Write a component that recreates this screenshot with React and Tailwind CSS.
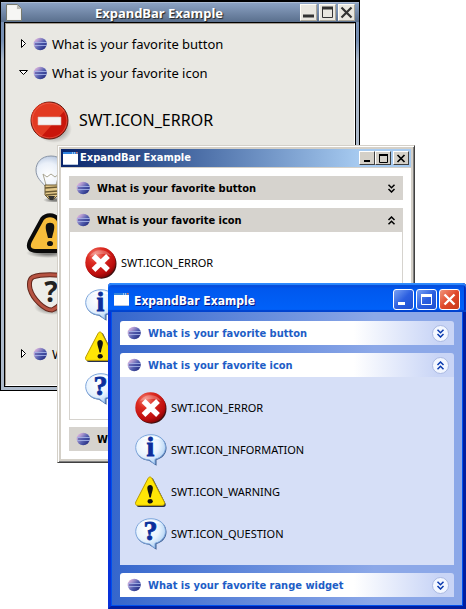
import React from "react";

const tahoma = "font-['DejaVu_Sans_Condensed','DejaVu_Sans',sans-serif]";

/* ---------- shared drawings ---------- */

function Defs() {
  return (
    <svg width="0" height="0" className="absolute" aria-hidden="true">
      <defs>
        <linearGradient id="sphere" x1="0" y1="0" x2="1" y2="0.8">
          <stop offset="0" stopColor="#f6c0e6" />
          <stop offset="0.3" stopColor="#b09ad0" />
          <stop offset="0.6" stopColor="#5560b0" />
          <stop offset="1" stopColor="#20287c" />
        </linearGradient>
        <radialGradient id="red" cx="0.35" cy="0.25" r="0.8">
          <stop offset="0" stopColor="#f58a7c" />
          <stop offset="0.35" stopColor="#dd2c22" />
          <stop offset="0.8" stopColor="#bd0d0d" />
          <stop offset="1" stopColor="#7d0505" />
        </radialGradient>
        <radialGradient id="bubble" cx="0.4" cy="0.35" r="0.7">
          <stop offset="0" stopColor="#ffffff" />
          <stop offset="0.55" stopColor="#e8f3fe" />
          <stop offset="1" stopColor="#a5cbf2" />
        </radialGradient>
        <radialGradient id="bulb" cx="0.4" cy="0.65" r="0.7">
          <stop offset="0" stopColor="#ffffff" />
          <stop offset="0.6" stopColor="#eaf0f9" />
          <stop offset="1" stopColor="#b6c6de" />
        </radialGradient>
        <radialGradient id="shade">
          <stop offset="0.3" stopColor="#000" stopOpacity="0.45" />
          <stop offset="1" stopColor="#000" stopOpacity="0" />
        </radialGradient>
      </defs>
    </svg>
  );
}

function Sphere() {
  return (
    <svg width="15" height="14" viewBox="0 0 15 14" className="shrink-0" aria-hidden="true">
      <ellipse cx="7.2" cy="7" rx="6.600" ry="6.200" fill="url(#sphere)" />
      <path d="M2 7h11" stroke="#39459a" strokeWidth="1" />
      <path d="M1 5.500h13M1 8.500h13" stroke="#a3b0e4" strokeWidth="0.900" />
    </svg>
  );
}

function ErrorIcon() {
  return (
    <svg width="32" height="32" viewBox="0 0 32 32" className="shrink-0" aria-hidden="true">
      <circle cx="16.500" cy="16.700" r="15" fill="#3b1010" />
      <circle cx="15.500" cy="15.500" r="15.200" fill="url(#red)" />
      <path d="M5 9C9 2 21 1 26 9 19 6 12 7 5 9Z" fill="#fff" opacity="0.25" />
      <path d="M8.500 9l14.500 14M23 9L8.500 23" stroke="#fff" strokeWidth="5.400" />
    </svg>
  );
}

function BubbleIcon({ glyph }) {
  return (
    <svg width="32" height="32" viewBox="0 0 32 32" className="shrink-0" aria-hidden="true">
      <path
        d="M17 1.500C26 1.500 31.500 7 31.500 14c0 6-4.500 10.500-10 12v5.800L14 26.800C6 26 1.200 21 1.200 14.500 1.200 7 8 1.500 17 1.500Z"
        fill="#35588e"
      />
      <path
        d="M16 .7C25 .7 30.500 6.500 30.500 13.300c0 6.200-4.500 10.700-10.500 12v5L14.500 26C6 25.500.700 20.300.700 13.500.700 6.500 7 .7 16 .7Z"
        fill="url(#bubble)"
        stroke="#7fa7dc"
        strokeWidth="1"
      />
      <path d="M6 6C11 1 21 1 26 6 20 4 12 4 6 6Z" fill="#fff" />
      <text
        x="15.500"
        y="22"
        textAnchor="middle"
        fontSize="28"
        fontWeight="700"
        fill="#0b2f9c"
        stroke="#0b2f9c"
        strokeWidth="0.800"
        className="font-['Liberation_Serif',serif]"
      >
        {glyph}
      </text>
    </svg>
  );
}

function WarningIcon() {
  return (
    <svg width="32" height="32" viewBox="0 0 32 32" className="shrink-0" aria-hidden="true">
      <path d="M14.500 3.500c1-2 3-2 4 0l12 24c.7 2-.2 3.500-2 3.500H4c-2 0-2.500-1-2-3Z" fill="#26304e" />
      <path
        d="M13 2.500c1-2 3-2 4 0l12.300 23.500c.8 2-.2 3.400-2 3.400H2.700c-2 0-2.700-1.400-1.900-3.400Z"
        fill="#ffe606"
        stroke="#b99a00"
        strokeWidth="1"
      />
      <path d="M12.300 12c0-4 5.600-4 5.600 0 0 3-1.500 5-2 9.500h-1.500c-.5-4.500-2.100-6.500-2.100-9.500Z" fill="#111" />
      <ellipse cx="15.200" cy="25.300" rx="2.600" ry="2.300" fill="#111" />
    </svg>
  );
}

function Chevrons({ open, color }) {
  return (
    <svg width="9" height="9" viewBox="0 0 9 9" className="shrink-0" fill="none" stroke={color} strokeWidth="1.500" aria-hidden="true">
      {open ? (
        <path d="M1.500 4l3-3 3 3M1.500 8.200l3-3 3 3" />
      ) : (
        <path d="M1.500 .8l3 3 3-3M1.500 5l3 3 3-3" />
      )}
    </svg>
  );
}

function AppIcon() {
  return (
    <svg width="15" height="13" viewBox="0 0 15 13" className="shrink-0" aria-hidden="true">
      <path d="M0 0h15v13H0z" fill="#fff" />
      <path d="M0 0h15v2H0z" fill="#2f83df" />
      <path d="M9 .5h1v1H9zM11 .5h1v1h-1z" fill="#fff" />
      <path d="M13 0h1.500v1.500H13z" fill="#e4674d" />
      <path d="M0 12.500h15" stroke="#b8c8e0" />
    </svg>
  );
}

const items = [
  { label: "SWT.ICON_ERROR", icon: <ErrorIcon /> },
  { label: "SWT.ICON_INFORMATION", icon: <BubbleIcon glyph="i" /> },
  { label: "SWT.ICON_WARNING", icon: <WarningIcon /> },
  { label: "SWT.ICON_QUESTION", icon: <BubbleIcon glyph="?" /> },
];

function IconList() {
  return (
    <ul className="flex flex-col gap-[10px] font-['Noto_Sans',sans-serif]">
      {items.map((item) => (
        <li key={item.label} className="flex items-center gap-1 text-[11px] leading-4 text-black">
          {item.icon}
          <span>{item.label}</span>
        </li>
      ))}
    </ul>
  );
}

/* ---------- GTK window ---------- */

function GtkButton({ label, children }) {
  return (
    <button
      aria-label={label}
      className="flex size-[17px] items-center justify-center border border-t-[#fffdf6] border-r-[#aaa597] border-b-[#aaa597] border-l-[#fffdf6] bg-[#e9e7e0]"
    >
      <svg width="13" height="13" viewBox="0 0 13 13" fill="none" stroke="#333" aria-hidden="true">
        {children}
      </svg>
    </button>
  );
}

function GtkHeader({ open, children }) {
  return (
    <button className="flex h-[29px] items-center text-left text-[13px] leading-5 text-black">
      <svg width="11" height="11" viewBox="0 0 11 11" className="mr-1 shrink-0" fill="#fff" stroke="#000" aria-hidden="true">
        {open ? <path d="M1.500 3.500h8l-4 4Z" /> : <path d="M3.500 1.500v8l4-4Z" />}
      </svg>
      <Sphere />
      <span className="ml-1 whitespace-nowrap">{children}</span>
    </button>
  );
}

function GtkWindow() {
  return (
    <section className="absolute top-0 left-0 flex h-[391px] w-[360px] flex-col border border-t-2 border-black bg-linear-to-b from-[#7890b4] from-10% to-[#aebbcc] to-15% px-[3px] pb-[3px] font-['Noto_Sans','Open_Sans',sans-serif]">
      <header className="-mx-[3px] flex h-5 shrink-0 items-center border-t border-[#a9b9d2] bg-linear-to-b from-[#8ba2c3] to-[#5a6f8d] pr-1 pl-[5px]">
        <svg width="16" height="17" viewBox="0 0 16 17" aria-hidden="true">
          <path d="M.5.5h11l4 4v12H.5Z" fill="#eeeeec" stroke="#777a70" />
          <path d="M1.500 1.500h9v4h4v10h-13Z" fill="#fafaf8" opacity=".7" />
          <path d="M11 .5v4.500h4.500Z" fill="#bbbbb5" />
        </svg>
        <h1 className="flex-1 pr-1 text-center text-[13px] leading-4 font-bold text-white [text-shadow:1px_1px_1px_#222]">
          ExpandBar Example
        </h1>
        <div className="flex gap-[2px]">
          <GtkButton label="Minimize">
            <path d="M1 10h11" strokeWidth="3" />
          </GtkButton>
          <GtkButton label="Maximize">
            <path d="M1.500 1v10.500h10V1" />
            <path d="M1 2h11" strokeWidth="3" />
          </GtkButton>
          <GtkButton label="Close">
            <path d="M1.500 1.500l10 10M11.500 1.500l-10 10" strokeWidth="2.200" />
          </GtkButton>
        </div>
      </header>
      <div className="flex-1 border border-black bg-[#e9e8e3]">
        <div className="h-full border border-t-[#a49a8e] border-r-white border-b-white border-l-[#a49a8e] px-3 pt-[5px]">
          <div className="flex flex-col items-start">
            <GtkHeader>What is your favorite button</GtkHeader>
            <GtkHeader open>What is your favorite icon</GtkHeader>
          </div>
          <ul className="mt-[2px] ml-2">
            <li className="flex h-[65px] items-start gap-[7px] pt-2 text-[16px] text-black">
              <svg width="48" height="48" viewBox="0 0 48 48" className="shrink-0" aria-hidden="true">
                <ellipse cx="28" cy="32" rx="18" ry="14" fill="url(#shade)" />
                <circle cx="23.500" cy="23.500" r="18.500" fill="#c9160b" stroke="#5e1a10" />
                <path d="M5.800 26C3 13 14 4 25 5.800c7 1 11 4 13.500 8L15 40C10 37 7 32 5.800 26Z" fill="#e23a22" />
                <circle cx="23.500" cy="23.500" r="17.300" fill="none" stroke="#ef7562" opacity=".5" />
                <path d="M12 20h23v8H12z" fill="#f4f4f4" stroke="#ddb9b4" strokeWidth=".6" />
              </svg>
              <span className="-ml-[2px] leading-[46px]">SWT.ICON_ERROR</span>
            </li>
            <li className="h-[57px]">
              <svg width="48" height="48" viewBox="0 0 48 48" aria-hidden="true">
                <ellipse cx="29" cy="46" rx="12" ry="3" fill="url(#shade)" />
                <path d="M25 2C15 2 10 9 10 16c0 8 6 12 9 16h13c3-5 8-8 8-16C40 8 34 2 25 2Z" fill="url(#bulb)" stroke="#8994a5" />
                <path d="M20 31l-3-11 4 3 4-3 4 3 4-3-3 11" fill="none" stroke="#a9a592" />
                <path d="M19 31h13v10l-4 4h-5l-4-4Z" fill="#e4c98a" stroke="#6b5b34" />
                <path d="M19 34l13-1M19 38l13-1M20 41l11-1" stroke="#6b5b34" strokeWidth="1.300" />
                <path d="M22 42h7l-2 4h-3Z" fill="#333" />
              </svg>
            </li>
            <li className="h-[58px]">
              <svg width="48" height="48" viewBox="0 0 48 48" aria-hidden="true">
                <ellipse cx="22" cy="42" rx="22" ry="5" fill="url(#shade)" />
                <path d="M16 8c4-5 12-5 16 0l12 23c2 6 0 9-7 9H11c-7 0-10-3-7-10Z" fill="#f7bd3b" stroke="#0a0a0a" strokeWidth="4" />
                <path d="M20 14c1-3 7-3 8 0 1 4-1 8-2 13h-4c-1-5-3-9-2-13Z" fill="#111" />
                <ellipse cx="24" cy="32.500" rx="3" ry="2.600" fill="#111" />
              </svg>
            </li>
            <li className="h-[70px]">
              <svg width="48" height="48" viewBox="0 0 48 48" aria-hidden="true">
                <ellipse cx="26" cy="38" rx="18" ry="8" fill="url(#shade)" />
                <path d="M7 8c8-3 26-3 34 0 4 2 3 8 1 13-4 10-10 18-16 20-8 0-19-11-22-21-1-5-1-10 3-12Z" fill="#edede9" stroke="#63271c" strokeWidth="5" />
                <path d="M7 8c8-3 26-3 34 0 4 2 3 8 1 13-4 10-10 18-16 20-8 0-19-11-22-21-1-5-1-10 3-12Z" fill="none" stroke="#b65342" strokeWidth="3" />
                <text x="25" y="33" textAnchor="middle" fontSize="28" fontWeight="700" fill="#222">
                  ?
                </text>
              </svg>
            </li>
          </ul>
          <GtkHeader>What is your favorite range widget</GtkHeader>
        </div>
      </div>
    </section>
  );
}

/* ---------- Windows classic ---------- */

function ClassicButton({ label, children }) {
  return (
    <button
      aria-label={label}
      className="flex h-[14px] w-4 items-center justify-center border border-t-white border-r-[#404040] border-b-[#404040] border-l-white bg-[#d4d0c8]"
    >
      <svg width="12" height="11" viewBox="0 0 12 11" fill="none" stroke="#000" aria-hidden="true">
        {children}
      </svg>
    </button>
  );
}

function ClassicHeader({ open, children }) {
  return (
    <button className="flex h-6 w-full items-center bg-[#d6d3ce] px-[7px] text-left text-[11px] leading-4 font-bold text-black">
      <Sphere />
      <span className="ml-1.5 flex-1 pt-0.5 whitespace-nowrap">{children}</span>
      <Chevrons open={open} color="#000" />
    </button>
  );
}

function ClassicWindow() {
  return (
    <section
      className={`absolute top-[145px] left-[57px] flex h-[318px] w-[358px] flex-col border border-t-[#d4d0c8] border-r-[#404040] border-b-[#404040] border-l-[#d4d0c8] bg-[#d4d0c8] shadow-[inset_1px_1px_#fff,inset_-1px_-1px_#808080] ${tahoma}`}
    >
      <div className="flex flex-1 flex-col p-[3px]">
        <header className="mb-px flex h-[18px] shrink-0 items-center bg-linear-to-r from-[#0a246a] to-[#a6caf0] to-85% px-[2px]">
          <AppIcon />
          <h2 className="ml-[2px] flex-1 text-[11px] leading-4 font-bold text-white">ExpandBar Example</h2>
          <ClassicButton label="Minimize">
            <path d="M3 8h6" strokeWidth="2" />
          </ClassicButton>
          <ClassicButton label="Maximize">
            <path d="M2.500 1v8.500h8V1" />
            <path d="M2 2h9" strokeWidth="2" />
          </ClassicButton>
          <span className="w-[2px]" />
          <ClassicButton label="Close">
            <path d="M2.500 2l7 7M9.500 2l-7 7" strokeWidth="1.700" />
          </ClassicButton>
        </header>
        <div className="flex-1 bg-white p-2">
          <div className="flex flex-col">
            <ClassicHeader>What is your favorite button</ClassicHeader>
            <div className="mt-2 mb-[7px]">
              <ClassicHeader open>What is your favorite icon</ClassicHeader>
              <div className="border border-t-0 border-[#d6d3ce] px-[15px] pt-[15px] pb-[14px]">
                <IconList />
              </div>
            </div>
            <ClassicHeader>What is your favorite range widget</ClassicHeader>
          </div>
        </div>
      </div>
    </section>
  );
}

/* ---------- Windows XP ---------- */

function LunaButton({ label, close, children }) {
  return (
    <button
      aria-label={label}
      className={`flex size-[21px] items-center justify-center rounded-[3px] border border-white ${
        close
          ? "bg-linear-to-br from-[#f0937a] via-[#e0482a] to-[#c83a1c]"
          : "bg-linear-to-br from-[#7aa0f2] via-[#2c5fe0] to-[#1d4fd0]"
      }`}
    >
      <svg width="19" height="19" viewBox="0 0 19 19" fill="none" stroke="#fff" aria-hidden="true">
        {children}
      </svg>
    </button>
  );
}

function LunaHeader({ open, children }) {
  return (
    <button className="flex h-6 w-full items-center rounded-t-[3px] bg-linear-to-r from-white from-70% to-[#c9d5f6] to-95% pr-[5px] pl-[7px] text-left text-[11px] leading-4 font-bold text-[#215dc6]">
      <Sphere />
      <span className="ml-1.5 flex-1 pt-0.5 whitespace-nowrap">{children}</span>
      <span className="flex size-[17px] items-center justify-center rounded-full border border-[#aab9e2] bg-[#f3f7ff]">
        <Chevrons open={open} color="#0a3aae" />
      </span>
    </button>
  );
}

function LunaWindow() {
  return (
    <section
      className={`absolute top-[283px] left-[108px] flex h-[326px] w-[358px] flex-col rounded-t-[4px] border-x-[3px] border-b-[3px] border-l-[#0831d9] border-r-[#001ea0] border-b-[#001ea0] bg-[#0050ee] ${tahoma}`}
    >
      <header className="-mx-[3px] flex h-[29px] shrink-0 items-center rounded-t-[4px] bg-linear-to-b from-[#0a40c8] via-[#0058ee] via-20% to-[#0062fa] pt-1 pr-[6px] pl-[6px] shadow-[inset_0_2px_1px_#2f8cff,inset_0_-2px_1px_#0043cf,inset_-2px_0_#0028b8]">
        <AppIcon />
        <h2 className="ml-[5px] flex-1 pt-0.5 text-[12px] leading-4 font-bold text-white [text-shadow:1px_1px_#0a1883]">
          ExpandBar Example
        </h2>
        <div className="flex gap-[2px]">
          <LunaButton label="Minimize">
            <path d="M4 13.500h7" strokeWidth="3" />
          </LunaButton>
          <LunaButton label="Maximize">
            <path d="M4.500 4v10.500h10V4" />
            <path d="M4 5.500h11" strokeWidth="3" />
          </LunaButton>
          <LunaButton label="Close" close>
            <path d="M4.500 4.500l10 10M14.500 4.500l-10 10" strokeWidth="2.400" />
          </LunaButton>
        </div>
      </header>
      <div className="flex-1 border-x border-b border-[#0050ee] bg-linear-to-r from-[#3566cc] to-[#8ca8e8] to-75% px-2 pt-[9px]">
        <div className="flex flex-col gap-2">
          <LunaHeader>What is your favorite button</LunaHeader>
          <div>
            <LunaHeader open>What is your favorite icon</LunaHeader>
            <div className="bg-[#d6dff7] p-[15px]">
              <IconList />
            </div>
          </div>
          <LunaHeader>What is your favorite range widget</LunaHeader>
        </div>
      </div>
    </section>
  );
}

export default function App() {
  return (
    <main className="relative min-h-screen overflow-hidden bg-white">
      <Defs />
      <GtkWindow />
      <ClassicWindow />
      <LunaWindow />
    </main>
  );
}
